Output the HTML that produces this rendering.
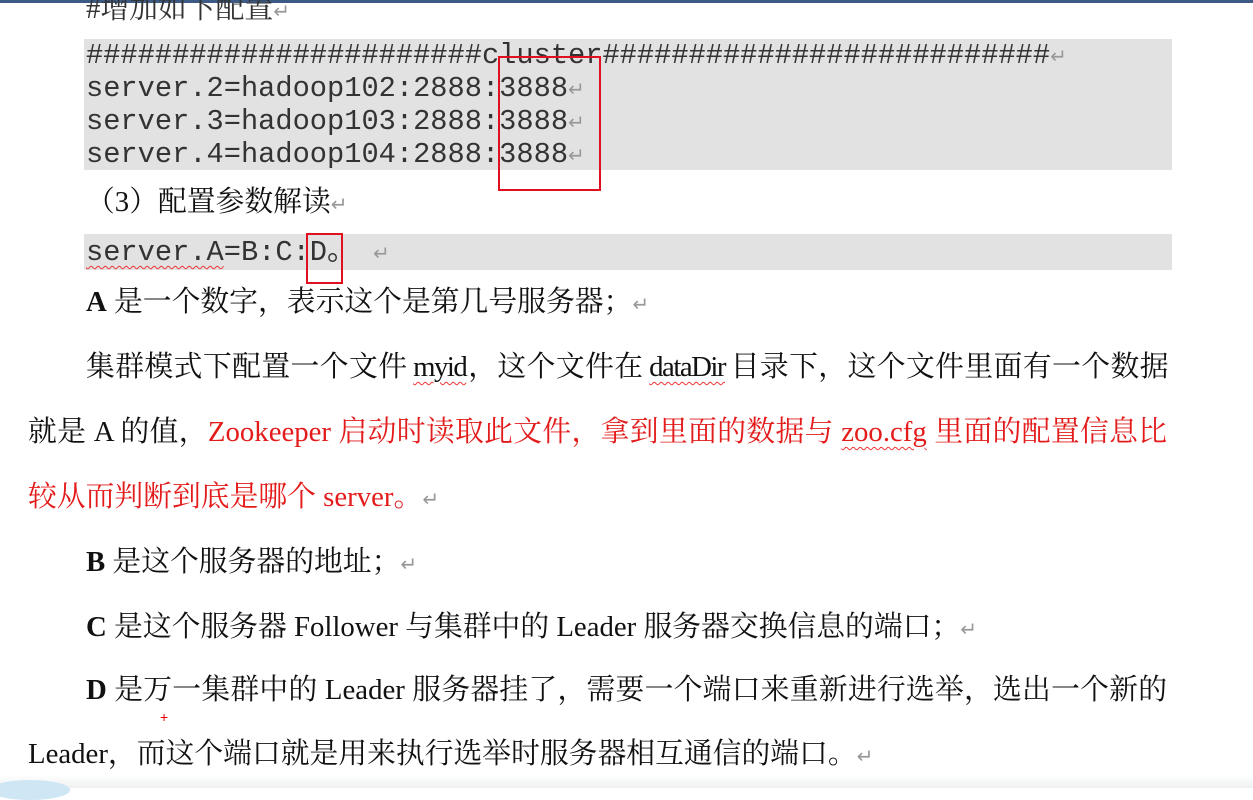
<!DOCTYPE html>
<html><head><meta charset="utf-8"><style>
body{margin:0;width:1253px;height:788px;background:#fff;position:relative;overflow:hidden;font-family:"Liberation Serif","Noto Serif CJK SC",serif;color:#111}
.l{position:absolute;font-size:28.8px;line-height:30px;white-space:nowrap}
.j{text-align:justify;text-align-last:justify;white-space:normal}
.m{font-family:"Liberation Mono",monospace;font-size:28.7px;color:#333}
.m div{height:33px;line-height:33px}
.r{color:#999;font-size:20px;font-family:"DejaVu Sans",sans-serif}
.red{color:#e31b1b}
.w{text-decoration:underline wavy #e33;text-decoration-thickness:1px;text-underline-offset:5px}
.g{position:absolute;background:#e2e2e2}
.box{position:absolute;border:2px solid #e01020}
</style></head><body>
<div style="position:absolute;left:0;top:0;width:1253px;height:3px;background:#3c5a84"></div>
<div class="l" style="left:86px;top:-6px;color:#333">#增加如下配置<span class="r">↵</span></div>
<div class="g" style="left:84px;top:39px;width:1088px;height:131px"></div>
<div class="g" style="left:84px;top:234px;width:1088px;height:36px"></div>
<div class="l m" style="left:86px;top:39px"><div>#######################cluster##########################<span class="r">↵</span></div><div>server.2=hadoop102:2888:3888<span class="r">↵</span></div><div>server.3=hadoop103:2888:3888<span class="r">↵</span></div><div>server.4=hadoop104:2888:3888<span class="r">↵</span></div></div>
<div class="box" style="left:498px;top:56px;width:99px;height:131px"></div>
<div class="l" style="left:86px;top:187px">（3）配置参数解读<span class="r">↵</span></div>
<div class="l m" style="left:86px;top:236px"><div><span class="w">server.A</span>=B:C:D。 <span class="r">↵</span></div></div>
<div class="box" style="left:306px;top:233px;width:33px;height:47px"></div>
<div class="l" style="left:86px;top:287px"><b>A</b> 是一个数字，表示这个是第几号服务器；<span class="r">↵</span></div>
<div class="l j" style="left:86px;top:352px;width:1081px;letter-spacing:-1.5px;word-spacing:-2px"><span>集群模式下配置一个文件 <span class="w">myid</span>，这个文件在 <span class="w">dataDir</span> 目录下，这个文件里面有一个数据</span></div>
<div class="l j" style="left:28px;top:417px;width:1139px">就是 A 的值，<span class="red">Zookeeper 启动时读取此文件，拿到里面的数据与 <span class="w">zoo.cfg</span> 里面的配置信息比</span></div>
<div class="l" style="left:28px;top:482px"><span class="red">较从而判断到底是哪个 server。</span><span class="r">↵</span></div>
<div class="l" style="left:86px;top:547px"><b>B</b> 是这个服务器的地址；<span class="r">↵</span></div>
<div class="l" style="left:86px;top:612px"><b>C</b> 是这个服务器 Follower 与集群中的 Leader 服务器交换信息的端口；<span class="r">↵</span></div>
<div class="l j" style="left:86px;top:675px;width:1081px"><b>D</b> 是万一集群中的 Leader 服务器挂了，需要一个端口来重新进行选举，选出一个新的</div>
<div style="position:absolute;left:160px;top:709px;color:#e00;font-size:14px;font-family:'Liberation Sans',sans-serif">+</div>
<div class="l" style="left:28px;top:739px">Leader，而这个端口就是用来执行选举时服务器相互通信的端口。<span class="r">↵</span></div>
<div style="position:absolute;left:0;top:775px;width:1253px;height:13px;background:linear-gradient(#fff,#eef0f2)"></div>
<div style="position:absolute;left:-10px;top:780px;width:80px;height:20px;border-radius:50%;background:#cfe6f5"></div>
</body></html>
